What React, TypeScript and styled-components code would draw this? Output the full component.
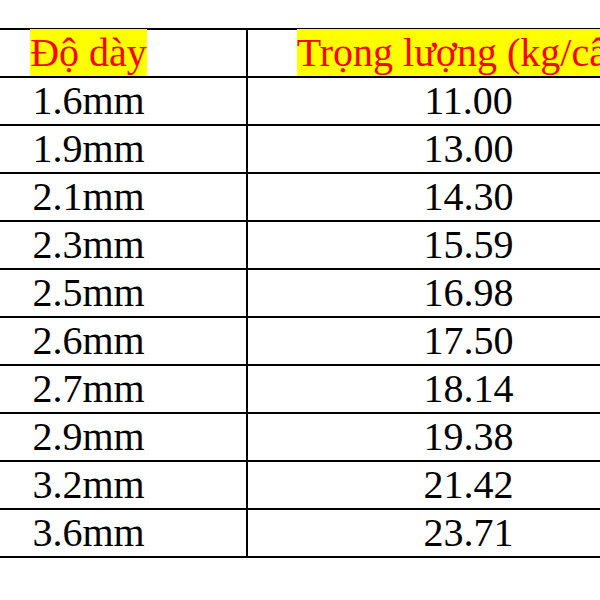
import React from 'react';
import styled, { createGlobalStyle } from 'styled-components';

const GlobalStyle = createGlobalStyle`
  html, body {
    margin: 0;
    padding: 0;
    background: #fff;
    overflow: hidden;
  }
  body {
    width: 600px;
    height: 600px;
  }
`;

const Sheet = styled.div`
  width: 600px;
  height: 600px;
  overflow: hidden;
  padding-top: 28px;
  box-sizing: border-box;
`;

const Table = styled.table`
  width: 758px;
  min-width: 758px;
  margin-left: -69px;
  border-collapse: separate;
  border-spacing: 0;
  border-top: 2px solid #000;
  font-family: 'Liberation Serif', 'Times New Roman', serif;
  font-size: 40px;
  color: #000;
  table-layout: fixed;
`;

const Col = styled.col<{ $w: number }>`
  width: ${(p) => p.$w}px;
`;

const Cell = styled.td<{ $first?: boolean }>`
  height: 46px;
  padding: 0;
  line-height: 46px;
  text-align: center;
  vertical-align: middle;
  border-bottom: 2px solid #000;
  border-right: ${(p) => (p.$first ? '2px solid #000' : 'none')};
  white-space: nowrap;
  overflow: visible;
`;

const HeadCell = styled(Cell).attrs({ as: 'th' })`
  font-weight: normal;
`;

const Marked = styled.span`
  color: #ff0000;
  background: #ffff00;
  padding: 1px 0;
`;

const rows: [string, string][] = [
  ['1.6mm', '11.00'],
  ['1.9mm', '13.00'],
  ['2.1mm', '14.30'],
  ['2.3mm', '15.59'],
  ['2.5mm', '16.98'],
  ['2.6mm', '17.50'],
  ['2.7mm', '18.14'],
  ['2.9mm', '19.38'],
  ['3.2mm', '21.42'],
  ['3.6mm', '23.71'],
];

export default function App() {
  return (
    <Sheet>
      <GlobalStyle />
      <Table>
        <colgroup>
          <Col $w={317} />
          <Col $w={441} />
        </colgroup>
        <thead>
          <tr>
            <HeadCell $first>
              <Marked>Độ dày</Marked>
            </HeadCell>
            <HeadCell>
              <Marked>Trọng lượng (kg/cây)</Marked>
            </HeadCell>
          </tr>
        </thead>
        <tbody>
          {rows.map(([thick, weight]) => (
            <tr key={thick}>
              <Cell $first>{thick}</Cell>
              <Cell>{weight}</Cell>
            </tr>
          ))}
        </tbody>
      </Table>
    </Sheet>
  );
}
